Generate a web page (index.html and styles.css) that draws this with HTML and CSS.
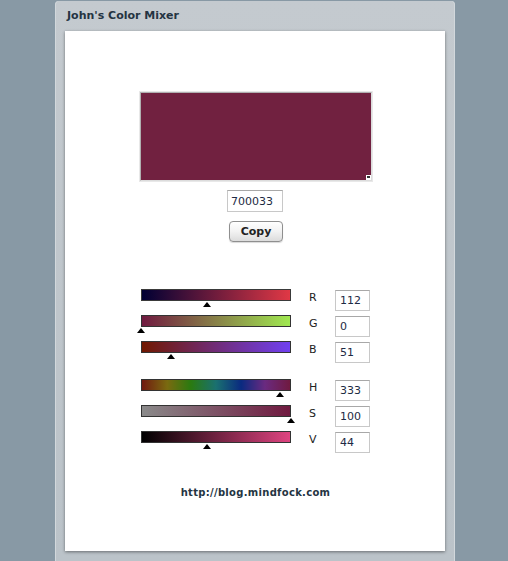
FILE: index.html
```html
<!DOCTYPE html>
<html>
<head>
<meta charset="utf-8">
<link rel="stylesheet" href="styles.css">
</head>
<body>
<div class="panel">
  <div class="title">John's Color Mixer</div>
  <div class="content">
    <div class="swatch"><span class="grip"></span></div>
    <input class="hex" type="text" value="700033">
    <button class="copy">Copy</button>
    <div class="sliders">
      <div class="group">
        <div class="row">
          <div class="track"><div class="bar bar-r"></div><span class="thumb" style="left:66px"></span></div>
          <span class="label">R</span>
          <input class="num" type="text" value="112">
        </div>
        <div class="row">
          <div class="track"><div class="bar bar-g"></div><span class="thumb" style="left:0px"></span></div>
          <span class="label">G</span>
          <input class="num" type="text" value="0">
        </div>
        <div class="row">
          <div class="track"><div class="bar bar-b"></div><span class="thumb" style="left:30px"></span></div>
          <span class="label">B</span>
          <input class="num" type="text" value="51">
        </div>
      </div>
      <div class="group">
        <div class="row">
          <div class="track"><div class="bar bar-h"></div><span class="thumb" style="left:139px"></span></div>
          <span class="label">H</span>
          <input class="num" type="text" value="333">
        </div>
        <div class="row">
          <div class="track"><div class="bar bar-s"></div><span class="thumb" style="left:150px"></span></div>
          <span class="label">S</span>
          <input class="num" type="text" value="100">
        </div>
        <div class="row">
          <div class="track"><div class="bar bar-v"></div><span class="thumb" style="left:66px"></span></div>
          <span class="label">V</span>
          <input class="num" type="text" value="44">
        </div>
      </div>
    </div>
    <div class="url">http://blog.mindfock.com</div>
  </div>
</div>
</body>
</html>
```
FILE: styles.css
```css
html, body {
  margin: 0;
  padding: 0;
  height: 100%;
  overflow: hidden;
}
body {
  background: #8899a5;
  font-family: "DejaVu Sans", Verdana, sans-serif;
}
.panel {
  width: 380px;
  margin: 1px 0 0 55px;
  padding: 0 10px 10px;
  background: linear-gradient(#c4cacf, #bbc3c9);
  border-radius: 4px 4px 0 0;
  box-shadow: inset 1px 0 0 #d2d8dc, inset -1px 0 0 #d2d8dc;
}
.title {
  height: 30px;
  line-height: 29px;
  padding-left: 2px;
  font-size: 11px;
  font-weight: bold;
  color: #243442;
}
.content {
  background: #fff;
  height: 520px;
  box-shadow: 0 1px 3px rgba(0, 0, 0, 0.45);
  display: flex;
  flex-direction: column;
  align-items: center;
}
.swatch {
  position: relative;
  margin-top: 61px;
  margin-left: 2px;
  width: 230px;
  height: 87px;
  background: #712140;
  border: 1px solid #b0b0b0;
  border-right-color: #dcdcdc;
  border-bottom-color: #dcdcdc;
  box-shadow: 0 0 0 1px #e8e8e8;
}
.grip {
  position: absolute;
  right: 0;
  bottom: 0;
  width: 5px;
  height: 5px;
  background: #fff;
}
.grip::after {
  content: "";
  position: absolute;
  left: 1px;
  top: 1px;
  width: 3px;
  height: 2px;
  background: #333;
}
.hex {
  margin-top: 9px;
  width: 56px;
  height: 22px;
  box-sizing: border-box;
  border: 1px solid #c8c8c8;
  border-top-color: #a8a8a8;
  padding: 0 3px;
  font-family: "DejaVu Sans", Verdana, sans-serif;
  font-size: 11px;
  color: #1e2a44;
  outline: none;
}
.copy {
  margin-top: 9px;
  margin-left: 2px;
  width: 54px;
  height: 21px;
  border: 1px solid #8f8f8f;
  border-radius: 4px;
  background: linear-gradient(#ffffff, #f2f2f2 50%, #dcdcdc);
  font-family: "DejaVu Sans", Verdana, sans-serif;
  font-size: 11px;
  font-weight: bold;
  color: #222;
  padding: 0;
  box-shadow: 0 1px 1px rgba(0, 0, 0, 0.15);
}
.sliders {
  margin-top: 47px;
  margin-left: 1px;
  display: flex;
  flex-direction: column;
  gap: 12px;
}
.group {
  display: flex;
  flex-direction: column;
}
.row {
  display: flex;
  align-items: flex-start;
  height: 26px;
}
.track {
  position: relative;
  width: 150px;
  height: 12px;
}
.bar {
  height: 12px;
  box-sizing: border-box;
  border: 1px solid #333;
}
.bar-r { background: linear-gradient(to right, #000033, #e03845); border-color: #3a3a3a; }
.bar-g { background: linear-gradient(to right, #701a40, #a0e850); }
.bar-b { background: linear-gradient(to right, #701800, #7040f0); }
.bar-h {
  background: linear-gradient(to right, #701a10, #7a6a10 17%, #2a7a10 33%, #1a7070 50%, #0a2a80 67%, #6a2a80 83%, #701a40);
}
.bar-s { background: linear-gradient(to right, #8a8a8a, #701a40); }
.bar-v { background: linear-gradient(to right, #000000, #de4480); }
.thumb {
  position: absolute;
  top: 13px;
  margin-left: -4px;
  width: 0;
  height: 0;
  border-left: 4px solid transparent;
  border-right: 4px solid transparent;
  border-bottom: 5px solid #000;
}
.label {
  margin-left: 18px;
  width: 26px;
  font-size: 11px;
  line-height: 16px;
  color: #222;
  padding-top: 1px;
}
.num {
  margin-top: 1px;
  width: 35px;
  height: 21px;
  box-sizing: border-box;
  border: 1px solid #c8c8c8;
  border-top-color: #a8a8a8;
  padding: 0 4px;
  font-family: "DejaVu Sans", Verdana, sans-serif;
  font-size: 11px;
  color: #1e2a44;
  outline: none;
}
.url {
  margin-top: 30px;
  margin-left: 1px;
  font-size: 10px;
  font-weight: bold;
  color: #243442;
  letter-spacing: 0.3px;
}
```
